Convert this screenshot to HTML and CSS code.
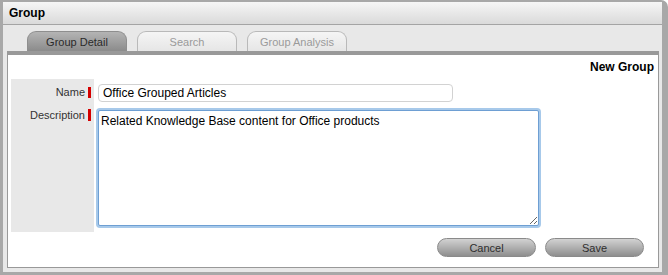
FILE: index.html
```html
<!DOCTYPE html>
<html>
<head>
    <meta charset="UTF-8">
    <title>Group</title>
    <link rel="stylesheet" href="styles.css">
</head>
<body>
    <div class="window">
        <div class="titlebar">Group</div>

        <div class="tabs">
            <div class="tab active">Group Detail</div>
            <div class="tab">Search</div>
            <div class="tab">Group Analysis</div>
        </div>

        <div class="panel">
            <div class="panel-head">New Group</div>

            <div class="form">
                <div class="label name-label">Name<span class="req"></span></div>
                <div class="field name-field">
                    <input type="text" id="groupName" value="Office Grouped Articles">
                </div>
                <div class="label desc-label">Description<span class="req"></span></div>
                <div class="field desc-field">
                    <textarea id="groupDesc">Related Knowledge Base content for Office products</textarea>
                </div>
            </div>

            <div class="actions">
                <button>Cancel</button>
                <button>Save</button>
            </div>
        </div>
    </div>
</body>
</html>
```

FILE: styles.css
```css
body {
    margin: 0;
    background: #fff;
    font-family: "Liberation Sans", Arial, sans-serif;
}

.window {
    width: 668px;
    height: 275px;
    box-sizing: border-box;
    border: 3px solid #a8a8a8;
    border-top-width: 2px;
    border-right-width: 6px;
    border-top-right-radius: 7px;
    background: #e8e8e8;
    display: flex;
    flex-direction: column;
}

.titlebar {
    height: 22px;
    line-height: 23px;
    padding-left: 6px;
    font-size: 12px;
    font-weight: bold;
    color: #000;
    background: linear-gradient(#f6f6f6, #dadada);
    border-bottom: 1px solid #a4a4a4;
}

/* Вкладки */
.tabs {
    height: 26px;
    box-sizing: border-box;
    padding: 6px 0 0 24px;
    display: flex;
    gap: 10px;
}

.tab {
    width: 100px;
    height: 20px;
    box-sizing: border-box;
    border: 1px solid #b9b9b9;
    border-bottom: none;
    border-radius: 9px 9px 0 0;
    background: linear-gradient(#f5f5f5, #e6e6e6);
    color: #9a9a9a;
    font-size: 11px;
    line-height: 20px;
    text-align: center;
}

.tab.active {
    border-color: #8e8e8e;
    background: linear-gradient(#b4b4b4, #8b8b8b);
    color: #2a2a2a;
}

/* Панель с формой */
.panel {
    flex: 1;
    margin: 0 3px 4px 4px;
    background: #fff;
    border: 1px solid #999;
    border-top: 4px solid #999;
    display: flex;
    flex-direction: column;
}

.panel-head {
    height: 24px;
    line-height: 25px;
    padding-right: 4px;
    text-align: right;
    font-size: 12px;
    font-weight: bold;
    color: #000;
}

.form {
    margin-left: 3px;
    display: grid;
    grid-template-columns: 83px 1fr;
    grid-template-rows: 26px 127px;
}

.label {
    background: #e8e8e8;
    font-size: 11px;
    color: #333;
    display: flex;
    justify-content: flex-end;
    align-items: flex-start;
    padding-right: 3px;
}

.name-label {
    padding-top: 7px;
}

.desc-label {
    padding-top: 4px;
}

.req {
    display: inline-block;
    width: 3px;
    height: 11px;
    margin: 1px 0 0 3px;
    background: #d40000;
}

.desc-label .req {
    height: 12px;
    margin-top: 0;
}

.field {
    padding-left: 4px;
}

.name-field {
    padding-top: 4px;
}

.desc-field {
    padding-top: 5px;
}

input[type=text] {
    width: 355px;
    height: 18px;
    box-sizing: border-box;
    border: 1px solid #d2d2d2;
    border-radius: 4px;
    padding: 0 4px;
    font-family: "Liberation Sans", Arial, sans-serif;
    font-size: 12px;
    color: #000;
    outline: none;
}

textarea {
    display: block;
    width: 441px;
    height: 116px;
    box-sizing: border-box;
    margin: 0;
    padding: 3px 2px;
    border: 1px solid #6e9fd3;
    border-radius: 2px;
    box-shadow: 0 0 0 2px #a7c9ea;
    font-family: "Liberation Sans", Arial, sans-serif;
    font-size: 12px;
    color: #000;
    outline: none;
    resize: both;
}

.actions {
    display: flex;
    justify-content: flex-end;
    gap: 9px;
    margin-top: 6px;
    padding-right: 14px;
}

button {
    width: 99px;
    height: 19px;
    padding: 0;
    border: 1px solid #8a8a8a;
    border-radius: 10px;
    background: linear-gradient(#d2d2d2, #8e8e8e);
    color: #2e2e2e;
    font-family: "Liberation Sans", Arial, sans-serif;
    font-size: 11px;
    cursor: pointer;
}
```
